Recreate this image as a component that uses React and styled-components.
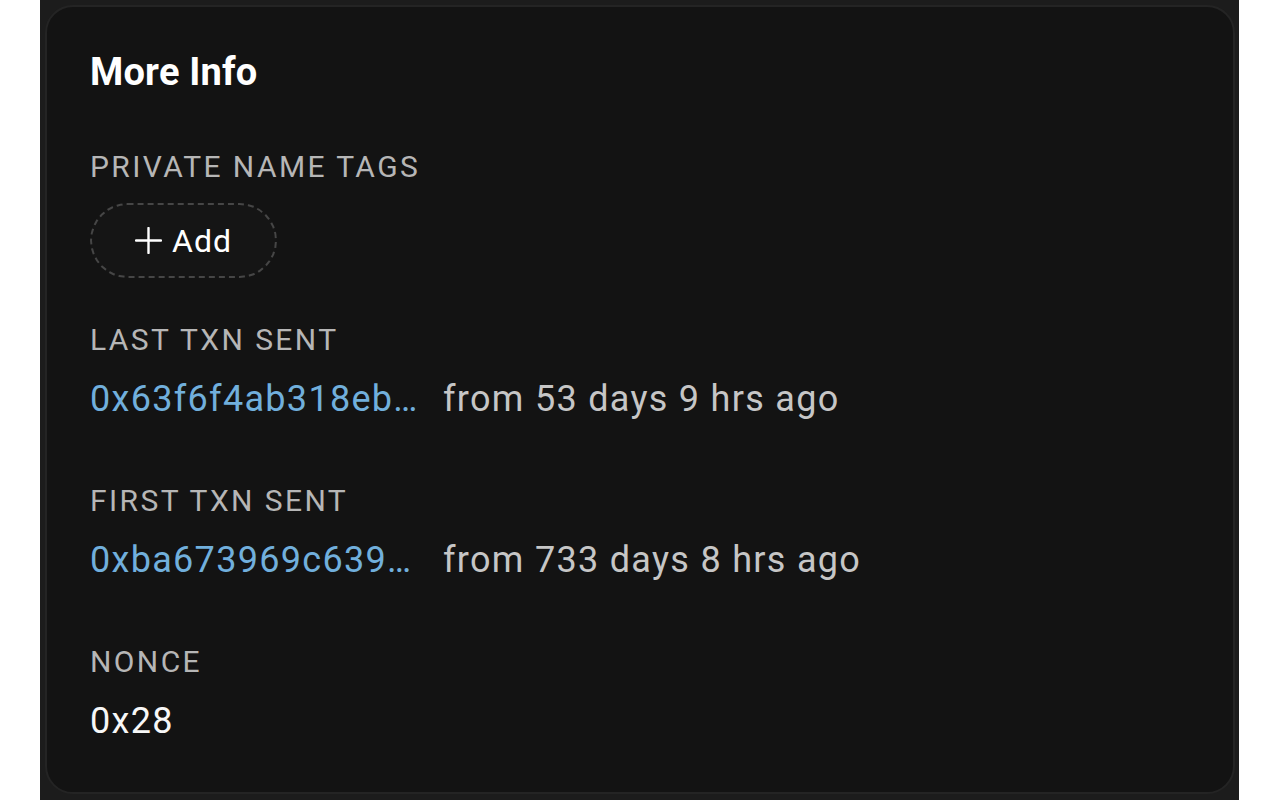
import React from 'react'
import styled, { createGlobalStyle } from 'styled-components'

const GlobalStyle = createGlobalStyle`
    html, body {
        margin: 0;
        background: #ffffff;
    }
    body {
        font-family: Roboto, "Liberation Sans", Arial, sans-serif;
    }
`;

const Page = styled.div`
    box-sizing: border-box;
    margin-left: 40px;
    width: 1199px;
    height: 800px;
    padding: 5px 4px 6px 5px;
    background: #1c1c1c;
`;

const Card = styled.section`
    box-sizing: border-box;
    height: 100%;
    padding: 42px 43px;
    background: #131313;
    border: 2px solid #242424;
    border-radius: 28px;
    color: #ffffff;
`;

const Title = styled.h2`
    margin: 0;
    font-size: 38px;
    line-height: 46px;
    font-weight: 700;
    letter-spacing: 0.2px;
    color: #ffffff;
`;

const Section = styled.div`
    margin-top: ${props => props.$top || 62}px;
`;

const Label = styled.div`
    font-size: 30px;
    line-height: 36px;
    font-weight: 400;
    letter-spacing: 2.4px;
    color: #b6b6b6;
    text-transform: uppercase;
    margin-bottom: ${props => props.$gap || 19}px;
`;

const AddButton = styled.button`
    box-sizing: border-box;
    display: inline-flex;
    align-items: center;
    justify-content: center;
    gap: 10px;
    width: 187px;
    height: 75px;
    padding: 0;
    background: #151515;
    border: 2px dashed #464646;
    border-radius: 999px;
    color: #ffffff;
    font-family: inherit;
    font-size: 32px;
    font-weight: 400;
    letter-spacing: 1px;
    cursor: pointer;
`;

const TxnRow = styled.div`
    display: flex;
    align-items: baseline;
    font-size: 36px;
    line-height: 44px;
    letter-spacing: 1.3px;
`;

const Hash = styled.a`
    width: 353px;
    flex-shrink: 0;
    color: #71afdc;
    text-decoration: none;
    white-space: nowrap;
`;

const Age = styled.span`
    color: #c6c6c6;
    white-space: nowrap;
`;

const Value = styled.div`
    font-size: 36px;
    line-height: 44px;
    letter-spacing: 1.3px;
    color: #f7f7f7;
`;

const PlusIcon = () => (
    <svg width="27" height="27" viewBox="0 0 27 27" fill="none">
        <path d="M13.5 1v25M1 13.5h25" stroke="#ffffff" strokeWidth="2.4" strokeLinecap="round" />
    </svg>
);

const txns = [
    { label: 'Last Txn Sent', hash: '0x63f6f4ab318eb…', age: 'from 53 days 9 hrs ago' },
    { label: 'First Txn Sent', hash: '0xba673969c639…', age: 'from 733 days 8 hrs ago' },
];

export default function App() {
    return (
        <>
            <GlobalStyle />
            <Page>
                <Card>
                    <Title>More Info</Title>
                    <Section $top={54}>
                        <Label $gap={18}>Private Name Tags</Label>
                        <AddButton>
                            <PlusIcon />
                            Add
                        </AddButton>
                    </Section>
                    {txns.map((txn, index) => (
                        <Section key={index} $top={index === 0 ? 44 : 62}>
                            <Label>{txn.label}</Label>
                            <TxnRow>
                                <Hash href="#">{txn.hash}</Hash>
                                <Age>{txn.age}</Age>
                            </TxnRow>
                        </Section>
                    ))}
                    <Section>
                        <Label>Nonce</Label>
                        <Value>0x28</Value>
                    </Section>
                </Card>
            </Page>
        </>
    )
}
